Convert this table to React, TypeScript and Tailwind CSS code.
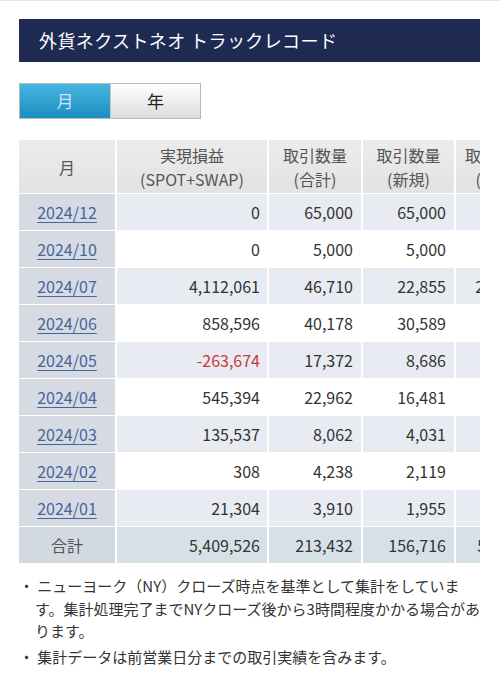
import React from "react";

const rows: { m: string; pl: string; total: string; nw: string; c5: string; neg?: boolean; alt: boolean }[] = [
  { m: "2024/12", pl: "0", total: "65,000", nw: "65,000", c5: "", alt: true },
  { m: "2024/10", pl: "0", total: "5,000", nw: "5,000", c5: "", alt: false },
  { m: "2024/07", pl: "4,112,061", total: "46,710", nw: "22,855", c5: "23,855", alt: true },
  { m: "2024/06", pl: "858,596", total: "40,178", nw: "30,589", c5: "9,589", alt: false },
  { m: "2024/05", pl: "-263,674", total: "17,372", nw: "8,686", c5: "8,686", neg: true, alt: true },
  { m: "2024/04", pl: "545,394", total: "22,962", nw: "16,481", c5: "6,481", alt: false },
  { m: "2024/03", pl: "135,537", total: "8,062", nw: "4,031", c5: "4,031", alt: true },
  { m: "2024/02", pl: "308", total: "4,238", nw: "2,119", c5: "2,119", alt: false },
  { m: "2024/01", pl: "21,304", total: "3,910", nw: "1,955", c5: "1,955", alt: true },
];

export default function App() {
  return (
    <div
      className="w-[500px] h-[680px] bg-white border-t border-[#e6e6e6] text-[#333]"
      style={{ fontFamily: '"Noto Sans CJK JP", "Noto Sans", sans-serif' }}
    >
      <div className="pl-[19px] pr-[20px] pt-[18px]">
        <div className="h-[43px] bg-[#1e2a52] flex items-center pl-[20px] text-white text-[18px] tracking-[0.4px]">
          外貨ネクストネオ トラックレコード
        </div>

        <div className="mt-[21px] flex w-[182px] h-[36px] border border-[#b8b8b8]">
          <div className="w-[90px] flex items-center justify-center text-[17px] text-[#c6e6f6] bg-gradient-to-b from-[#45b5e0] to-[#1b8dc2]">
            月
          </div>
          <div className="flex-1 flex items-center justify-center text-[17px] text-[#222] bg-gradient-to-b from-[#ffffff] to-[#dcdcdc] border-l border-[#c8c8c8]">
            年
          </div>
        </div>

        <div className="mt-[21px] w-[461px] overflow-hidden">
          <div className="grid grid-cols-[96px_150px_92px_91px_82px] gap-x-[2px] gap-y-[1px] w-[517px] text-[16px]">
            <div className="h-[53px] bg-gradient-to-b from-[#ececec] to-[#e2e2e2] flex items-center justify-center text-[#555]">月</div>
            <div className="h-[53px] bg-gradient-to-b from-[#ececec] to-[#e2e2e2] flex flex-col items-center justify-center text-[#555] leading-[24px]">
              <span>実現損益</span>
              <span>(SPOT+SWAP)</span>
            </div>
            <div className="h-[53px] bg-gradient-to-b from-[#ececec] to-[#e2e2e2] flex flex-col items-center justify-center text-[#555] leading-[24px]">
              <span>取引数量</span>
              <span>(合計)</span>
            </div>
            <div className="h-[53px] bg-gradient-to-b from-[#ececec] to-[#e2e2e2] flex flex-col items-center justify-center text-[#555] leading-[24px]">
              <span>取引数量</span>
              <span>(新規)</span>
            </div>
            <div className="h-[53px] bg-gradient-to-b from-[#ececec] to-[#e2e2e2] flex flex-col items-center justify-center text-[#555] leading-[24px]">
              <span>取引数量</span>
              <span>(決済)</span>
            </div>

            {rows.map((r) => {
              const bg = r.alt ? "bg-[#e8ebf2]" : "bg-white";
              return (
                <React.Fragment key={r.m}>
                  <div className="h-[36px] bg-[#d6dbe3] flex items-center justify-center">
                    <span className="text-[#45659a] underline underline-offset-[3px] decoration-[1px]">{r.m}</span>
                  </div>
                  <div className={`h-[36px] ${bg} flex items-center justify-end pr-[7px] ${r.neg ? "text-[#c8383a]" : ""}`}>{r.pl}</div>
                  <div className={`h-[36px] ${bg} flex items-center justify-end pr-[8px]`}>{r.total}</div>
                  <div className={`h-[36px] ${bg} flex items-center justify-end pr-[8px]`}>{r.nw}</div>
                  <div className={`h-[36px] ${bg} flex items-center justify-end pr-[14px]`}>{r.m === "2024/07" ? r.c5 : ""}</div>
                </React.Fragment>
              );
            })}

            <div className="h-[36px] bg-[#d3d9e1] flex items-center justify-center text-[#555]">合計</div>
            <div className="h-[36px] bg-[#d6e1e7] flex items-center justify-end pr-[7px]">5,409,526</div>
            <div className="h-[36px] bg-[#d6e1e7] flex items-center justify-end pr-[8px]">213,432</div>
            <div className="h-[36px] bg-[#d6e1e7] flex items-center justify-end pr-[8px]">156,716</div>
            <div className="h-[36px] bg-[#d6e1e7] flex items-center justify-end pr-[12px]">56,716</div>
          </div>
        </div>

        <div className="mt-[12px] text-[15px] leading-[22.5px] text-[#333]">
          <p className="pl-[16px] [text-indent:-16px]">
            ・ ニューヨーク（NY）クローズ時点を基準として集計をしています。集計処理完了までNYクローズ後から3時間程度かかる場合があります。
          </p>
          <p className="mt-[3px] pl-[16px] [text-indent:-16px]">・ 集計データは前営業日分までの取引実績を含みます。</p>
        </div>
      </div>
    </div>
  );
}
